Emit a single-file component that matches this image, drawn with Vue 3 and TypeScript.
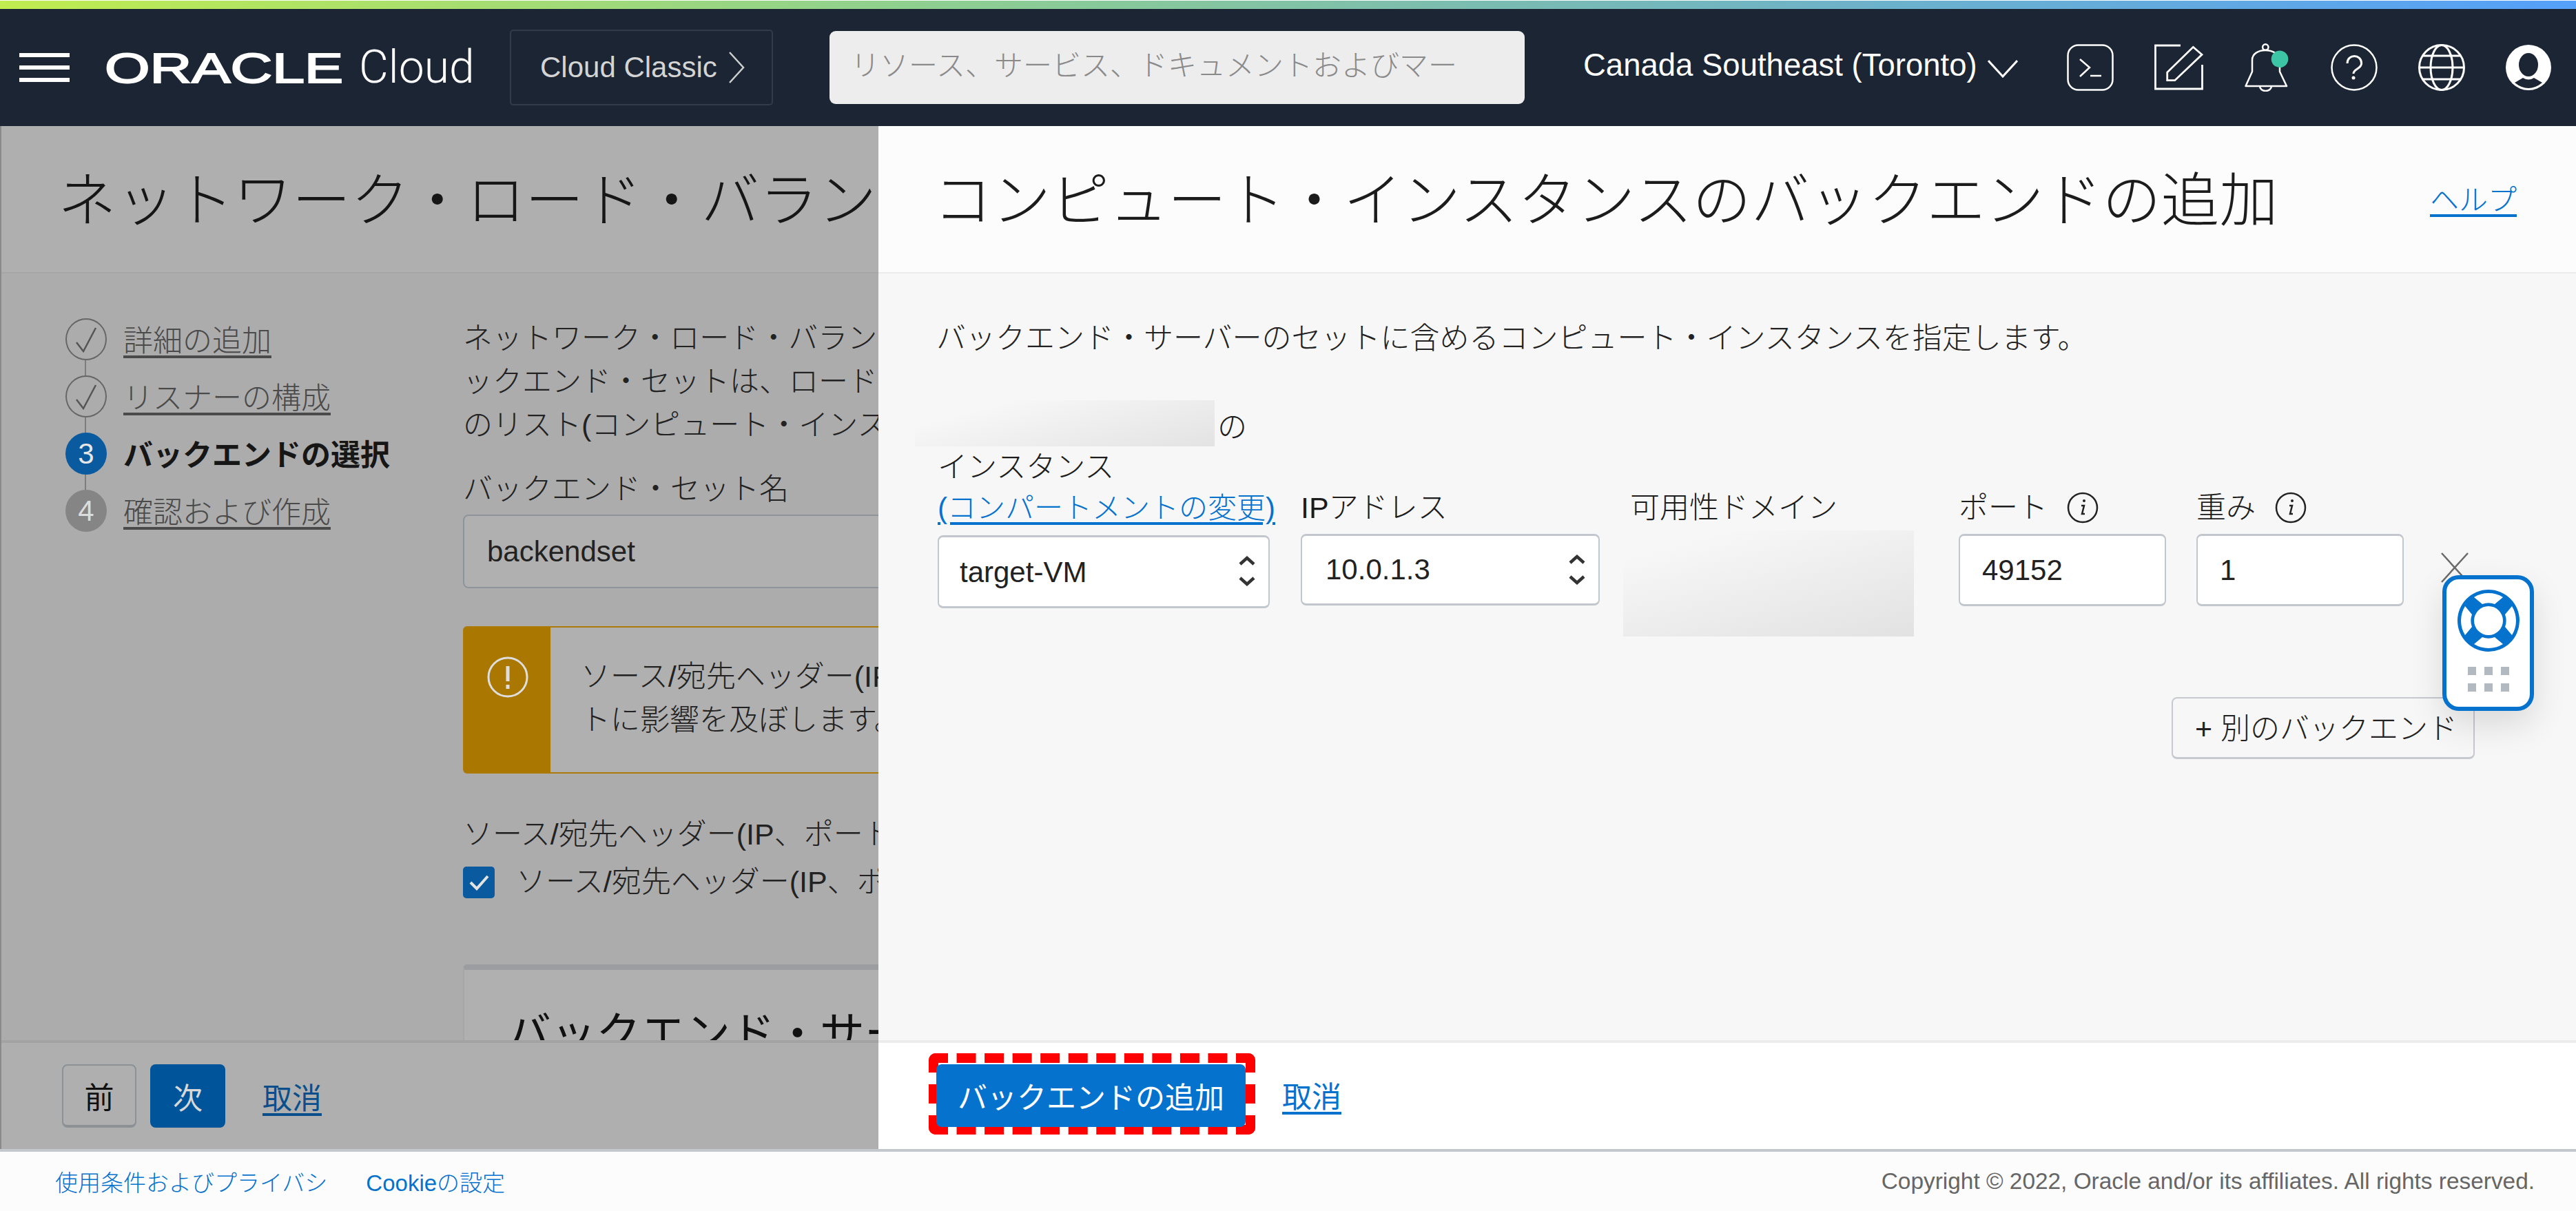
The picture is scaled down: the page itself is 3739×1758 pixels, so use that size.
<template>
  <div class="app">
    <div class="topline"></div>
    <header class="header">
      <div class="burger"><i></i><i></i><i></i></div>
      <div class="logo"><span class="oracle">ORACLE</span><span class="cloud">Cloud</span></div>
      <button class="classic">
        Cloud Classic
        <svg width="24" height="46" viewBox="0 0 24 46"><path d="M2 1l20 22L2 45" fill="none" stroke="#cfcfcf" stroke-width="2.5" /></svg>
      </button>
      <div class="search">リソース、サービス、ドキュメントおよびマー</div>
      <div class="region">
        Canada Southeast (Toronto)
        <svg width="44" height="26" viewBox="0 0 44 26"><path d="M1 1l21 23L43 1" fill="none" stroke="#fff" stroke-width="3" /></svg>
      </div>
      <div class="tools">
        <svg width="68" height="68" viewBox="0 0 68 68" fill="none" stroke="#fff" stroke-width="2.5">
          <rect x="1.5" y="1.5" width="65" height="65" rx="15" />
          <path d="M19 22l14 12-14 13M34 46h16" />
        </svg>
        <svg width="72" height="68" viewBox="0 0 72 68" fill="none" stroke="#fff" stroke-width="2.8">
          <path d="M38 2H1.5v63h68V30" />
          <path d="M56.3 4.3L69 15.3 29.7 52.7h-11V41z" />
        </svg>
        <svg width="64" height="70" viewBox="0 0 64 70" fill="none" stroke="#fff" stroke-width="2.5">
          <path d="M1.5 62L11 41V24c0-9 9-14 19-14s21 5 21 14v17l10 21z" stroke-linejoin="round" />
          <circle cx="30.3" cy="5.5" r="4.2" />
          <path d="M22 62a8.5 7 0 0 0 17 0" />
          <circle cx="51" cy="22.7" r="12.3" fill="#3cc6a6" stroke="none" />
        </svg>
        <svg class="help-icon" width="68" height="68" viewBox="-34 -34 68 68" fill="none" stroke="#fff" stroke-width="2.5">
          <circle r="32.5" />
          <path d="M-10-6c0-14 20.600-14 20.600 0C10.600 2-1 2-1 9" stroke-width="3" />
          <circle cx="-1" cy="15" r="2.500" fill="#fff" stroke="none" />
        </svg>
        <svg width="68" height="68" viewBox="-34 -34 68 68" fill="none" stroke="#fff" stroke-width="3">
          <circle r="32.5" />
          <ellipse rx="16" ry="32.5" />
          <path d="M-33 0h66M-28-17h56M-28 17h56" />
        </svg>
        <svg width="66" height="66" viewBox="-33 -33 66 66">
          <circle r="33" fill="#fff" />
          <ellipse cy="-4" rx="14" ry="17" fill="#1b2533" />
          <path d="M-20 22L-8 15Q0 20 8 15L20 22Q0 38-20 22z" fill="#1b2533" />
        </svg>
      </div>
    </header>

    <main class="main">
      <section class="page">
        <h1 class="page-title">ネットワーク・ロード・バランサの作成</h1>
        <div class="page-body">
          <ol class="steps">
            <template v-for="(s, i) in steps" :key="s.label">
              <li v-if="i > 0" class="link-line"></li>
              <li class="step">
                <span class="dot" :class="s.state">
                  <svg v-if="s.state === 'done'" width="34" height="40" viewBox="0 0 34 40">
                    <path d="M3 24l10 13L31 3" fill="none" stroke="#555" stroke-width="2.5" />
                  </svg>
                  <template v-else>{{ i + 1 }}</template>
                </span>
                <span class="step-label" :class="{ current: s.state === 'current' }">{{ s.label }}</span>
              </li>
            </template>
          </ol>
          <div class="content">
            <p class="text">ネットワーク・ロード・バランサのバックエンド・セットを指定します。バ</p>
            <p class="text">ックエンド・セットは、ロード・バランサのトラフィックを受信するサーバー</p>
            <p class="text">のリスト(コンピュート・インスタンス)です。</p>
            <label class="text set-label">バックエンド・セット名</label>
            <div class="set-input">backendset</div>
            <div class="warning">
              <div class="warning-icon">
                <svg width="60" height="60" viewBox="0 0 60 60" fill="none" stroke="#dedede" stroke-width="3">
                  <circle cx="30" cy="30" r="28" />
                  <path d="M30 14v22M30 41v6" stroke-width="5" />
                </svg>
              </div>
              <div class="warning-text">
                <p class="text">ソース/宛先ヘッダー(IP、ポート)の保持はバックエンドのトラフィッ</p>
                <p class="text">トに影響を及ぼします。</p>
              </div>
            </div>
            <p class="text keep-label">ソース/宛先ヘッダー(IP、ポート)の保持</p>
            <div class="keep">
              <span class="checkbox">
                <svg width="46" height="46" viewBox="0 0 46 46"><path d="M11 23l9 9 16-18" fill="none" stroke="#e4e4e4" stroke-width="4" /></svg>
              </span>
              <span class="text">ソース/宛先ヘッダー(IP、ポート)の保持</span>
            </div>
            <div class="card">
              <h2>バックエンド・サーバー</h2>
            </div>
          </div>
        </div>
        <footer class="page-foot">
          <button class="btn prev">前</button>
          <button class="btn next">次</button>
          <a class="cancel dim">取消</a>
        </footer>
      </section>

      <aside class="drawer">
        <div class="drawer-head">
          <h1>コンピュート・インスタンスのバックエンドの追加</h1>
          <a class="help">ヘルプ</a>
        </div>
        <div class="drawer-body">
          <p class="text intro">バックエンド・サーバーのセットに含めるコンピュート・インスタンスを指定します。</p>
          <div class="row">
            <div class="col col-inst">
              <div class="inst-line"><span class="blur-name"></span><span>の</span></div>
              <div class="field-label">インスタンス</div>
              <a class="field-label change">(コンパートメントの変更)</a>
              <div class="select inst-select">target-VM<svg class="updown" width="26" height="44" viewBox="0 0 26 44"><path d="M3 12l10-9 10 9M3 32l10 9 10-9" fill="none" stroke="#333" stroke-width="4.500" /></svg></div>
            </div>
            <div class="col col-ip">
              <div class="field-label">IPアドレス</div>
              <div class="select">10.0.1.3<svg class="updown" width="26" height="44" viewBox="0 0 26 44"><path d="M3 12l10-9 10 9M3 32l10 9 10-9" fill="none" stroke="#333" stroke-width="4.500" /></svg></div>
            </div>
            <div class="col col-ad">
              <div class="field-label ad-label">可用性ドメイン</div>
              <div class="blur-ad"></div>
            </div>
            <div v-for="f in numberFields" :key="f.label" class="col col-num">
              <div class="field-label">
                {{ f.label }}
                <svg class="info" width="46" height="46" viewBox="0 0 46 46" fill="none" stroke="#222" stroke-width="2.5">
                  <circle cx="23" cy="23" r="21" />
                  <path d="M21 20h4l-3 12h4" stroke-width="2.5" />
                  <circle cx="25" cy="13" r="2" fill="#222" stroke="none" />
                </svg>
              </div>
              <input class="num" :value="f.value" />
            </div>
            <svg class="remove" width="40" height="44" viewBox="0 0 40 44"><path d="M1 1l38 42M39 1L1 43" fill="none" stroke="#6a6a6a" stroke-width="2.5" /></svg>
          </div>
          <div class="add-row"><button class="add">+ 別のバックエンド</button></div>
        </div>
        <footer class="drawer-foot">
          <div class="dashed"><button class="btn primary">バックエンドの追加</button></div>
          <a class="cancel">取消</a>
        </footer>
        <div class="helper">
          <svg width="90" height="90" viewBox="0 0 90 90">
            <circle cx="45" cy="45" r="45" fill="#0572ce" />
            <path
              v-for="a in [0, 90, 180, 270]"
              :key="a"
              d="M24 11A40 40 0 0 1 66 11L54 21A26 26 0 0 0 36 21Z"
              fill="#fff"
              :transform="`rotate(${a} 45 45)`"
            />
            <circle cx="45" cy="45" r="21" fill="#fff" />
          </svg>
          <div class="grip"><i v-for="n in 6" :key="n"></i></div>
        </div>
      </aside>
    </main>

    <footer class="bottom">
      <a>使用条件およびプライバシ</a>
      <a>Cookieの設定</a>
      <span class="copy">Copyright © 2022, Oracle and/or its affiliates. All rights reserved.</span>
    </footer>
  </div>
</template>

<script setup lang="ts">
interface Step {
  label: string;
  state: 'done' | 'current' | 'todo';
}

const steps: Step[] = [
  { label: '詳細の追加', state: 'done' },
  { label: 'リスナーの構成', state: 'done' },
  { label: 'バックエンドの選択', state: 'current' },
  { label: '確認および作成', state: 'todo' },
];

const numberFields = [
  { label: 'ポート', value: '49152' },
  { label: '重み', value: '1' },
];
</script>

<style>
html,
body {
  margin: 0;
  overflow: hidden;
}
</style>

<style scoped>
.app {
  width: 3739px;
  height: 1758px;
  display: flex;
  flex-direction: column;
  overflow: hidden;
  background: #fcfcfc;
  color: #1c1c1c;
  font-family: "Liberation Sans", "Noto Sans CJK JP", sans-serif;
  font-size: 43px;
  font-weight: 300;
}
p,
h1,
h2,
ol {
  margin: 0;
  padding: 0;
}
button {
  font: inherit;
}
.topline {
  height: 12px;
  margin-top: 1px;
  background: linear-gradient(90deg, #c0ec4f 0%, #8fd08f 35%, #78bab4 60%, #55a0fa 100%);
}

.header {
  height: 170px;
  display: flex;
  align-items: center;
  background: #1b2533;
  color: #fff;
  font-size: 42px;
}
.burger {
  width: 73px;
  margin-left: 28px;
  display: flex;
  flex-direction: column;
  gap: 12px;
  flex-shrink: 0;
}
.burger i {
  display: block;
  height: 6px;
  background: #fff;
}
.logo {
  margin-left: 51px;
  width: 588px;
  flex-shrink: 0;
  display: flex;
  align-items: baseline;
  white-space: nowrap;
}
.oracle {
  display: inline-block;
  width: 369px;
  font-size: 61px;
  font-weight: 400;
  line-height: 70px;
  -webkit-text-stroke: 2px #fff;
  transform: scaleX(1.38);
  transform-origin: left;
}
.cloud {
  font-family: Roboto, "Liberation Sans", sans-serif;
  font-weight: 300;
  font-size: 66px;
  line-height: 70px;
}
.classic {
  width: 382px;
  height: 110px;
  flex-shrink: 0;
  padding: 0 0 0 42px;
  display: flex;
  align-items: center;
  gap: 16px;
  background: transparent;
  border: 2px solid #323b4a;
  border-radius: 5px;
  color: #d4d4d4;
  font-weight: 400;
}
.search {
  width: 1009px;
  height: 106px;
  flex-shrink: 0;
  margin-left: 82px;
  padding-left: 31px;
  box-sizing: border-box;
  line-height: 102px;
  background: #ededed;
  border-radius: 9px;
  color: #8a8a8a;
  white-space: nowrap;
  overflow: hidden;
}
.region {
  margin-left: 85px;
  margin-bottom: 6px;
  display: flex;
  align-items: center;
  gap: 15px;
  font-size: 45.500px;
  font-weight: 400;
  white-space: nowrap;
}
.region svg {
  margin-top: 10px;
}
.tools {
  margin-left: auto;
  margin-right: 36px;
  display: flex;
  align-items: center;
  gap: 59px;
}
.help-icon {
  margin-left: 2px;
}

.main {
  flex: 1;
  position: relative;
  min-height: 0;
}
.page {
  height: 100%;
  display: flex;
  flex-direction: column;
  box-sizing: border-box;
  border-left: 2px solid #8a8a8a;
  background: #acacac;
}
.page-title {
  height: 214px;
  flex-shrink: 0;
  box-sizing: border-box;
  padding-left: 82px;
  padding-top: 54px;
  font-size: 85px;
  font-weight: 300;
  line-height: 110px;
  white-space: nowrap;
  overflow: hidden;
  color: #161616;
  background: #afafaf;
  border-bottom: 2px solid #a6a6a6;
}
.page-body {
  flex: 1;
  min-height: 0;
  display: flex;
  align-items: flex-start;
  overflow: hidden;
}
.steps {
  list-style: none;
  width: 670px;
  flex-shrink: 0;
  box-sizing: border-box;
  padding: 65px 0 0 93px;
}
.step {
  height: 61px;
  display: flex;
  align-items: center;
  gap: 24px;
  white-space: nowrap;
}
.link-line {
  width: 2px;
  height: 22px;
  margin-left: 28px;
  background: #7d7d7d;
}
.dot {
  width: 60px;
  height: 61px;
  box-sizing: border-box;
  flex-shrink: 0;
  border-radius: 50%;
  display: flex;
  align-items: center;
  justify-content: center;
  font-weight: 400;
  font-size: 42px;
}
.dot.done {
  border: 2px solid #666;
}
.dot.current {
  background: #0a5aa0;
  color: #e6e6e6;
}
.dot.todo {
  background: #858585;
  color: #dcdcdc;
}
.step-label {
  margin-top: -4px;
  color: #4a4a4a;
  text-decoration: underline;
  text-underline-offset: 6px;
}
.step-label.current {
  color: #161616;
  font-weight: 700;
  text-decoration: none;
}
.content {
  width: 1800px;
  flex-shrink: 0;
  padding-top: 63px;
}
.text {
  display: block;
  line-height: 63px;
  white-space: nowrap;
  color: #222;
}
.set-label {
  margin-top: 30px;
}
.set-input {
  height: 107px;
  margin-top: 5px;
  padding-left: 33px;
  box-sizing: border-box;
  line-height: 103px;
  background: #b0b0b0;
  border: 2px solid #8e949a;
  border-radius: 8px;
  color: #222;
  font-size: 42px;
}
.warning {
  height: 214px;
  margin-top: 55px;
  display: flex;
  background: #b0b0b0;
  border: 2px solid #ac7a08;
  border-radius: 6px;
  box-sizing: border-box;
}
.warning-icon {
  width: 125px;
  flex-shrink: 0;
  background: #aa7700;
  display: flex;
  justify-content: center;
  padding-top: 42px;
  box-sizing: border-box;
}
.warning-text {
  padding: 40px 0 0 44px;
}
.keep-label {
  margin-top: 57px;
}
.keep {
  margin-top: 6px;
  display: flex;
  align-items: center;
  gap: 31px;
}
.checkbox {
  width: 46px;
  height: 46px;
  border-radius: 5px;
  background: #0a5aa0;
  flex-shrink: 0;
}
.checkbox svg {
  display: block;
}
.card {
  margin-top: 88px;
  height: 400px;
  box-sizing: border-box;
  padding: 48px 0 0 61px;
  background: #b0b0b0;
  border: 2px solid #a6a6a6;
  border-top: 8px solid #9c9da0;
  border-radius: 6px 0 0 0;
}
.card h2 {
  font-size: 65px;
  font-weight: 400;
  line-height: 90px;
  color: #111;
}
.page-foot,
.drawer-foot {
  height: 158px;
  flex-shrink: 0;
  box-sizing: border-box;
  display: flex;
  align-items: center;
}
.page-foot {
  padding: 0 0 0 88px;
  background: #afafaf;
  border-top: 4px solid #a3a3a3;
  gap: 20px;
}
.btn {
  height: 92px;
  box-sizing: border-box;
  border-radius: 8px;
  font-weight: 400;
}
.prev {
  width: 108px;
  padding: 0;
  background: #afafaf;
  border: 2px solid #8c9196;
  border-bottom-width: 4px;
  color: #111;
}
.next {
  width: 109px;
  padding: 0;
  background: #005499;
  border: none;
  color: #d8d8d8;
}
.cancel {
  margin-left: 34px;
  font-weight: 400;
  color: #0572ce;
  text-decoration: underline;
  text-underline-offset: 6px;
}
.cancel.dim {
  color: #0a4f8c;
}

.drawer {
  position: absolute;
  top: 0;
  left: 1275px;
  right: 0;
  bottom: 0;
  display: flex;
  flex-direction: column;
  background: #f7f7f7;
}
.drawer-head {
  height: 214px;
  flex-shrink: 0;
  box-sizing: border-box;
  display: flex;
  justify-content: space-between;
  padding: 54px 86px 0 80px;
  background: #fcfcfc;
  border-bottom: 2px solid #ececec;
}
.drawer-head h1 {
  font-size: 85px;
  font-weight: 300;
  line-height: 110px;
  white-space: nowrap;
}
.help {
  margin-top: 24px;
  font-size: 42px;
  color: #0572ce;
  text-decoration: underline;
  text-underline-offset: 6px;
  line-height: 60px;
}
.drawer-body {
  flex: 1;
  min-height: 0;
  padding: 61px 147px 0 84px;
}
.intro {
  margin-top: 2px;
  margin-bottom: -2px;
}
.row {
  display: flex;
  align-items: flex-start;
  margin-top: 67px;
  padding-left: 2px;
}
.col {
  flex-shrink: 0;
}
.col-inst {
  width: 482px;
}
.inst-line {
  height: 60px;
  display: flex;
  align-items: center;
  margin-top: -2px;
  margin-bottom: 2px;
}
.blur-name {
  width: 435px;
  height: 67px;
  margin: 0 4px 3px -33px;
  flex-shrink: 0;
  background: linear-gradient(165deg, #f7f7f7 20%, #e3e3e3 100%);
}
.field-label {
  height: 60px;
  line-height: 60px;
  white-space: nowrap;
  display: flex;
  align-items: center;
  gap: 28px;
}
.change {
  display: block;
  margin-right: -6px;
  color: #0572ce;
  font-size: 42px;
  text-decoration: underline;
  text-underline-offset: 6px;
}
.select {
  position: relative;
  height: 104px;
  margin-top: 8px;
  padding-left: 34px;
  box-sizing: border-box;
  line-height: 98px;
  background: #fff;
  border: 2px solid #c2c7cd;
  border-top-width: 3px;
  border-bottom-width: 3px;
  border-radius: 8px;
  color: #222;
  font-size: 42px;
}
.inst-select {
  margin-top: 9px;
  height: 106px;
  padding-left: 30px;
  line-height: 102px;
}
.updown {
  position: absolute;
  right: 18px;
  top: 27px;
}
.col-ip {
  width: 434px;
  margin: 119px 0 0 45px;
}
.col-ad {
  width: 422px;
  margin: 119px 0 0 34px;
}
.ad-label {
  padding-left: 10px;
}
.blur-ad {
  height: 154px;
  margin-top: 3px;
  background: linear-gradient(165deg, #f7f7f7 15%, #e2e2e2 100%);
}
.col-num {
  width: 301px;
  margin: 119px 0 0 44px;
}
.col-ad + .col-num {
  margin-left: 65px;
}
.info {
  flex-shrink: 0;
}
.num {
  display: block;
  width: 100%;
  height: 105px;
  margin-top: 8px;
  padding: 0 0 0 32px;
  box-sizing: border-box;
  background: #fff;
  border: 2px solid #c2c7cd;
  border-top-width: 3px;
  border-bottom-width: 3px;
  border-radius: 8px;
  font: inherit;
  font-size: 42px;
  color: #222;
  outline: none;
}
.remove {
  flex-shrink: 0;
  margin: 214px 0 0 54px;
}
.add-row {
  display: flex;
  justify-content: flex-end;
  margin-top: 88px;
}
.add {
  width: 440px;
  height: 90px;
  padding: 0 0 6px 32px;
  text-align: left;
  background: #f7f7f7;
  border: 2px solid #c6cacf;
  border-bottom-width: 3px;
  border-radius: 8px;
  color: #222;
  white-space: nowrap;
}
.drawer-foot {
  padding-left: 73px;
  background: #fff;
  border-top: 4px solid #ececec;
}
.dashed {
  padding: 0;
  border: 14px dashed #f00;
  border-radius: 10px;
  display: flex;
  height: 90px;
  align-items: center;
  margin-top: -6px;
}
.primary {
  width: 449px;
  height: 91px;
  background: #0572ce;
  border: none;
  color: #fff;
  margin: 4px 0 0 -3px;
  padding: 0;
  white-space: nowrap;
}
.drawer-foot .cancel {
  margin-left: 39px;
  margin-top: -4px;
}
.helper {
  position: absolute;
  top: 652px;
  left: 2270px;
  width: 133px;
  height: 197px;
  box-sizing: border-box;
  padding-top: 15px;
  border: 6px solid #0572ce;
  border-radius: 24px;
  background: #fff;
  box-shadow: 0 20px 50px rgba(0, 0, 0, 0.12);
  display: flex;
  flex-direction: column;
  align-items: center;
}
.grip {
  display: grid;
  grid-template-columns: repeat(3, 12px);
  gap: 12px;
  margin-top: 22px;
}
.grip i {
  display: block;
  height: 12px;
  background: #b3b9c1;
}

.bottom {
  height: 90px;
  flex-shrink: 0;
  box-sizing: border-box;
  display: flex;
  align-items: center;
  padding: 0 60px 0 80px;
  gap: 56px;
  border-top: 4px solid #c2c8ce;
  background: #fcfcfc;
  font-size: 33px;
}
.bottom a {
  color: #0572ce;
  white-space: nowrap;
}
.copy {
  margin-left: auto;
  font-size: 33.400px;
  color: #666;
  white-space: nowrap;
}
</style>
